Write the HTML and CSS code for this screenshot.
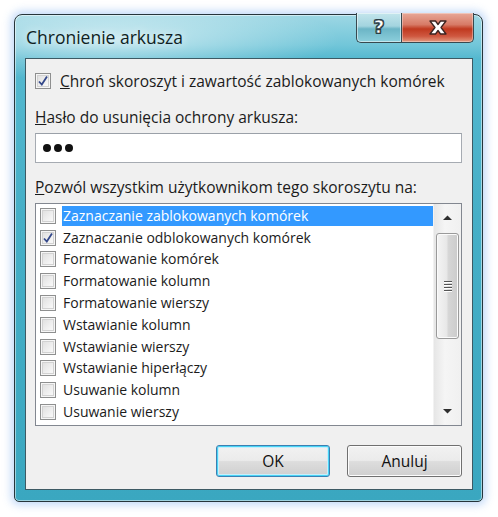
FILE: index.html
```html
<!DOCTYPE html>
<html lang="pl">
<head>
<meta charset="utf-8">
<title>Chronienie arkusza</title>
<link rel="stylesheet" href="styles.css">
</head>
<body>
<div class="window">
  <div class="titlebar">
    <div class="title">Chronienie arkusza</div>
    <div class="caption-buttons">
      <div class="cap-btn help"><span class="help-glyph">?</span></div>
      <div class="cap-btn close">
        <svg width="22" height="17" viewBox="0 0 22 17"><path d="M3 2 H8.5 L11 5.5 L13.5 2 H19 L14 8.5 L19 15 H13.5 L11 11.5 L8.5 15 H3 L8 8.5 Z" fill="#fff" stroke="#3b2320" stroke-width="1.3" stroke-linejoin="round"/></svg>
      </div>
    </div>
  </div>
  <div class="client">
    <div class="check-row">
      <span class="cb"><svg class="tick" width="12" height="12" viewBox="0 0 12 12"><path d="M2 6.5 L4.8 9.5 L10 1.5" fill="none" stroke="#34488a" stroke-width="1.8"/></svg></span>
      <span class="label"><u>C</u>hroń skoroszyt i zawartość zablokowanych komórek</span>
    </div>
    <div class="field-label"><u>H</u>asło do usunięcia ochrony arkusza:</div>
    <div class="textbox"><span class="dot"></span><span class="dot"></span><span class="dot"></span></div>
    <div class="field-label second"><u>P</u>ozwól wszystkim użytkownikom tego skoroszytu na:</div>
    <div class="listbox">
      <div class="items">
        <div class="item selected"><span class="cb"></span><span class="text">Zaznaczanie zablokowanych komórek</span></div>
        <div class="item"><span class="cb"><svg class="tick" width="12" height="12" viewBox="0 0 12 12"><path d="M2 6.5 L4.8 9.5 L10 1.5" fill="none" stroke="#34488a" stroke-width="1.8"/></svg></span><span class="text">Zaznaczanie odblokowanych komórek</span></div>
        <div class="item"><span class="cb"></span><span class="text">Formatowanie komórek</span></div>
        <div class="item"><span class="cb"></span><span class="text">Formatowanie kolumn</span></div>
        <div class="item"><span class="cb"></span><span class="text">Formatowanie wierszy</span></div>
        <div class="item"><span class="cb"></span><span class="text">Wstawianie kolumn</span></div>
        <div class="item"><span class="cb"></span><span class="text">Wstawianie wierszy</span></div>
        <div class="item"><span class="cb"></span><span class="text">Wstawianie hiperłączy</span></div>
        <div class="item"><span class="cb"></span><span class="text">Usuwanie kolumn</span></div>
        <div class="item"><span class="cb"></span><span class="text">Usuwanie wierszy</span></div>
      </div>
      <div class="scrollbar">
        <div class="arrow up"><svg width="9" height="5" viewBox="0 0 9 5"><path d="M0 5 L4.5 0.5 L9 5 Z" fill="#2f2f2f"/></svg></div>
        <div class="thumb"><div class="grip"><i></i><i></i><i></i><i></i></div></div>
        <div class="track"></div>
        <div class="arrow down"><svg width="9" height="5" viewBox="0 0 9 5"><path d="M0 0 L4.5 4.5 L9 0 Z" fill="#2f2f2f"/></svg></div>
      </div>
    </div>
    <div class="buttons">
      <div class="btn default">OK</div>
      <div class="btn">Anuluj</div>
    </div>
  </div>
</div>
</body>
</html>
```

FILE: styles.css
```css
html, body {
  margin: 0;
  padding: 0;
  background: #ffffff;
}
body {
  width: 498px;
  height: 517px;
  overflow: hidden;
  font-family: "Open Sans", "Noto Sans", "DejaVu Sans", sans-serif;
  color: #1b1b1b;
}
.window {
  margin: 14px 0 0 14px;
  width: 469px;
  height: 488px;
  box-sizing: border-box;
  border: 1px solid #26353b;
  border-radius: 8px 8px 5px 5px;
  background:
    radial-gradient(ellipse 230px 42px at 95px 24px, rgba(255,255,255,0.6), rgba(255,255,255,0) 100%),
    linear-gradient(to bottom, #9dd7e4 0px, #72c6d9 30px, #54b8cf 44px, #46afc7 200px, #3aa7c0 100%);
  box-shadow: 0 0 9px 3px rgba(120,170,240,0.45), inset 0 0 0 1px rgba(255,255,255,0.5);
  display: flex;
  flex-direction: column;
}
.titlebar {
  height: 43px;
  display: flex;
  justify-content: space-between;
  align-items: flex-start;
  flex: none;
}
.title {
  padding: 10px 0 0 11px;
  font-size: 17.5px;
  line-height: 24px;
  color: #0f1e23;
  text-shadow: 0 0 8px rgba(255,255,255,0.9);
}
.caption-buttons {
  display: flex;
  margin: -2px 8px 0 0;
}
.cap-btn {
  height: 30px;
  box-sizing: border-box;
  border: 1px solid #38494f;
  border-top: none;
  display: flex;
  align-items: center;
  justify-content: center;
}
.help {
  width: 45px;
  border-radius: 0 0 0 5px;
  border-right: none;
  background: linear-gradient(to bottom, #c3e5ec 0%, #a3d4df 45%, #6cb5c6 55%, #8ccfdc 100%);
  box-shadow: inset 0 0 0 1px rgba(255,255,255,0.5);
}
.help-glyph {
  font-family: "DejaVu Sans", sans-serif;
  font-weight: bold;
  font-size: 18px;
  line-height: 1;
  color: #ffffff;
  -webkit-text-stroke: 0.6px #2c3c45;
  text-shadow: 1px 0 0 #2c3c45, -1px 0 0 #2c3c45, 0 1px 0 #2c3c45, 0 -1px 0 #2c3c45, 1px 1px 0 #2c3c45, -1px -1px 0 #2c3c45, 1px -1px 0 #2c3c45, -1px 1px 0 #2c3c45;
  margin-top: -1px;
}
.close {
  width: 73px;
  border-radius: 0 0 5px 0;
  background: linear-gradient(to bottom, #e8a898 0%, #d77a66 40%, #c0391f 55%, #cf5840 80%, #e29a80 100%);
  box-shadow: inset 0 0 0 1px rgba(255,255,255,0.35);
}
.client {
  flex: 1;
  margin: 0 9px 11px 10px;
  background: #f0f0f0;
  border: 1px solid #3d5a64;
  padding: 12px 10px 12px 9px;
  display: flex;
  flex-direction: column;
  font-size: 15.5px;
}
.check-row {
  display: flex;
  align-items: center;
  height: 20px;
}
.cb {
  width: 16px;
  height: 16px;
  box-sizing: border-box;
  border: 1px solid #8e8f8f;
  background: linear-gradient(135deg, #dcdcdc 0%, #f4f4f4 70%, #fbfbfb 100%);
  box-shadow: inset 0 0 0 1px #f6f6f6, inset 0 0 0 2px #d2d2d2;
  display: flex;
  align-items: center;
  justify-content: center;
  flex: none;
}
.check-row .label {
  margin-left: 9px;
  line-height: 20px;
}
.field-label {
  margin-top: 16px;
  line-height: 20px;
  height: 20px;
}
.field-label.second {
  margin-top: 14px;
}
.textbox {
  margin-top: 6px;
  height: 30px;
  box-sizing: border-box;
  border: 1px solid #a6abb2;
  border-top-color: #9aa0a8;
  background: #ffffff;
  padding-left: 7px;
  display: flex;
  align-items: center;
  gap: 3px;
}
.dot {
  width: 8px;
  height: 8px;
  border-radius: 50%;
  background: #111;
}
.listbox {
  margin-top: 6px;
  height: 223px;
  box-sizing: border-box;
  border: 1px solid #828790;
  background: #ffffff;
  display: flex;
  font-size: 14px;
}
.items {
  flex: 1;
  padding-top: 1px;
}
.item {
  height: 21.8px;
  display: flex;
  align-items: center;
  padding-left: 4px;
}
.item .text {
  margin-left: 6px;
  padding: 0 0 0 1px;
  line-height: 20px;
  flex: 1;
  height: 20px;
}
.item.selected .text {
  background: #3399ff;
  color: #ffffff;
}
.scrollbar {
  width: 27px;
  flex: none;
  display: flex;
  flex-direction: column;
  background: linear-gradient(to right, #e6e6e6, #f5f5f5 40%, #f0f0f0);
  border-left: 1px solid #f2f2f2;
}
.arrow {
  height: 27px;
  display: flex;
  align-items: center;
  justify-content: center;
  flex: none;
}
.thumb {
  margin: 2px 2px 0 2px;
  height: 106px;
  box-sizing: border-box;
  border: 1px solid #9a9a9a;
  border-radius: 3px;
  background: linear-gradient(to right, #f4f4f4 0%, #e8e8e8 45%, #d6d6d6 55%, #cbcbcb 100%);
  box-shadow: inset 0 0 0 1px #fbfbfb;
  display: flex;
  align-items: center;
  justify-content: center;
  flex: none;
}
.grip {
  display: flex;
  flex-direction: column;
  gap: 2px;
}
.grip i {
  display: block;
  width: 8px;
  height: 1px;
  background: #555;
  box-shadow: 0 1px 0 #fff;
}
.track {
  flex: 1;
}
.buttons {
  margin-top: 19px;
  display: flex;
  justify-content: flex-end;
  gap: 17px;
}
.btn {
  width: 115px;
  height: 32px;
  box-sizing: border-box;
  border: 1px solid #707070;
  border-radius: 3px;
  background: linear-gradient(to bottom, #f2f2f2 0%, #ebebeb 48%, #dddddd 52%, #cfcfcf 100%);
  box-shadow: inset 0 0 0 1px #fcfcfc;
  display: flex;
  align-items: center;
  justify-content: center;
  font-size: 15.5px;
  color: #111;
}
.btn.default {
  width: 114px;
  border-color: #3c7fb1;
  box-shadow: inset 0 0 0 1px #48d4f6, inset 0 0 0 2px #c8eefb;
}
```
